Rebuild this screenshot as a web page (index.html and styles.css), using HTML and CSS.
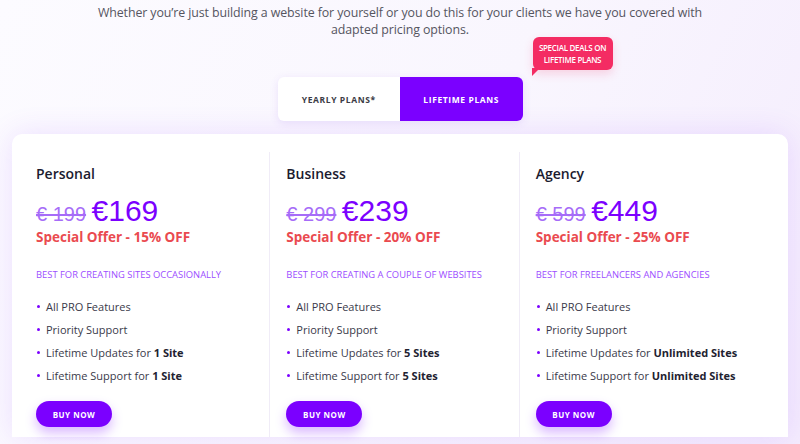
FILE: index.html
```html
<!DOCTYPE html>
<html lang="en">
<head>
    <meta charset="UTF-8">
    <meta name="viewport" content="width=device-width, initial-scale=1.0">
    <title>Pricing</title>
    <link rel="stylesheet" href="styles.css">
</head>
<body>
    <div class="page">
        <p class="intro">Whether you’re just building a website for yourself or you do this for your clients we have you covered with adapted pricing options.</p>

        <!-- Plan switch -->
        <div class="switch-wrap">
            <div class="switch">
                <button class="switch-btn">YEARLY PLANS*</button>
                <button class="switch-btn active">LIFETIME PLANS</button>
            </div>
            <div class="deal-badge">SPECIAL DEALS ON<br>LIFETIME PLANS</div>
        </div>

        <!-- Pricing table -->
        <div class="pricing">
            <div class="plan">
                <h3 class="plan-name">Personal</h3>
                <div class="price"><span class="old-price">€ 199</span> <span class="new-price">€169</span></div>
                <div class="offer">Special Offer - 15% OFF</div>
                <div class="best-for">BEST FOR CREATING SITES OCCASIONALLY</div>
                <ul class="features">
                    <li>All PRO Features</li>
                    <li>Priority Support</li>
                    <li>Lifetime Updates for <b>1 Site</b></li>
                    <li>Lifetime Support for <b>1 Site</b></li>
                </ul>
                <button class="buy-btn">BUY NOW</button>
            </div>
            <div class="plan">
                <h3 class="plan-name">Business</h3>
                <div class="price"><span class="old-price">€ 299</span> <span class="new-price">€239</span></div>
                <div class="offer">Special Offer - 20% OFF</div>
                <div class="best-for">BEST FOR CREATING A COUPLE OF WEBSITES</div>
                <ul class="features">
                    <li>All PRO Features</li>
                    <li>Priority Support</li>
                    <li>Lifetime Updates for <b>5 Sites</b></li>
                    <li>Lifetime Support for <b>5 Sites</b></li>
                </ul>
                <button class="buy-btn">BUY NOW</button>
            </div>
            <div class="plan">
                <h3 class="plan-name">Agency</h3>
                <div class="price"><span class="old-price">€ 599</span> <span class="new-price">€449</span></div>
                <div class="offer">Special Offer - 25% OFF</div>
                <div class="best-for">BEST FOR FREELANCERS AND AGENCIES</div>
                <ul class="features">
                    <li>All PRO Features</li>
                    <li>Priority Support</li>
                    <li>Lifetime Updates for <b>Unlimited Sites</b></li>
                    <li>Lifetime Support for <b>Unlimited Sites</b></li>
                </ul>
                <button class="buy-btn">BUY NOW</button>
            </div>
        </div>
    </div>
</body>
</html>
```

FILE: styles.css
```css
body {
    margin: 0;
    height: 444px;
    overflow: hidden;
    background-color: #f8f5fd;
    background-image: linear-gradient(115deg, #fcfbff 0%, #f9f6fe 55%, #f4ecfd 100%);
    font-family: "Open Sans", sans-serif;
    color: #3a3a4a;
}

.intro {
    width: 620px;
    margin: 4px auto 0;
    font-size: 12.4px;
    letter-spacing: -0.1px;
    line-height: 17px;
    text-align: center;
    color: #55555f;
}

.switch-wrap {
    position: relative;
    width: 245px;
    margin: 39px auto 0;
}

.switch {
    display: flex;
    height: 44px;
    border-radius: 6px;
    background-color: #ffffff;
    box-shadow: 0 2px 8px rgba(120, 60, 220, 0.12);
}

.switch-btn {
    flex: 1;
    border: none;
    background: none;
    font-family: inherit;
    font-size: 8.5px;
    font-weight: 700;
    letter-spacing: 0.6px;
    color: #3b3b45;
    cursor: pointer;
}

.switch-btn.active {
    background-color: #7b00ff;
    color: #ffffff;
    border-radius: 0 6px 6px 0;
}

.deal-badge {
    position: absolute;
    left: 255px;
    top: -40px;
    width: 80px;
    padding: 5px 0;
    border-radius: 6px;
    background-color: #f42c63;
    box-shadow: 0 4px 10px rgba(244, 44, 99, 0.18);
    color: #ffffff;
    font-size: 8px;
    font-weight: 600;
    letter-spacing: -0.3px;
    line-height: 11.5px;
    text-align: center;
}

/* little tail at the bottom left */
.deal-badge::after {
    content: "";
    position: absolute;
    left: -1px;
    bottom: -6px;
    border-top: 8px solid #f42c63;
    border-right: 8px solid transparent;
}

.pricing {
    display: grid;
    grid-template-columns: repeat(3, 1fr);
    margin: 13px 12px 0;
    padding: 18px 20px 0 8px;
    background-color: #ffffff;
    border-radius: 10px 10px 0 0;
    box-shadow: 0 0 30px rgba(140, 60, 255, 0.14);
}

.plan {
    padding: 12px 16px 10px;
}

.plan + .plan {
    border-left: 1px solid #f0ecf7;
}

.plan-name {
    margin: 0;
    font-size: 14px;
    line-height: 20px;
    font-weight: 600;
    color: #1b1b2f;
}

.price {
    margin-top: 11px;
    line-height: 32px;
    font-family: "Liberation Sans", Arial, sans-serif;
    white-space: nowrap;
}

.old-price {
    font-size: 20px;
    color: #a66cf8;
    text-decoration: line-through;
}

.new-price {
    margin-left: 1px;
    font-size: 30px;
    color: #7b00ff;
}

.offer {
    margin-top: -4px;
    font-size: 13.5px;
    line-height: 18px;
    font-weight: 700;
    color: #ea4a4f;
}

.best-for {
    margin-top: 22px;
    font-size: 9.4px;
    line-height: 14px;
    color: #9c4dff;
}

.features {
    margin: 13px 0 0;
    padding: 0;
    list-style: none;
}

.features li {
    position: relative;
    padding-left: 10px;
    font-size: 11px;
    line-height: 23px;
    color: #3a3a4a;
}

.features li::before {
    content: "";
    position: absolute;
    left: 1px;
    top: 10px;
    width: 3px;
    height: 3px;
    border-radius: 50%;
    background-color: #7b00ff;
}

.features b {
    font-weight: 700;
    color: #222230;
}

.buy-btn {
    margin-top: 14px;
    width: 76px;
    height: 26px;
    border: none;
    border-radius: 13px;
    background-color: #7b00ff;
    box-shadow: 0 6px 12px rgba(123, 0, 255, 0.28);
    color: #ffffff;
    font-family: inherit;
    font-size: 8px;
    font-weight: 700;
    letter-spacing: 0.5px;
    cursor: pointer;
}
```
